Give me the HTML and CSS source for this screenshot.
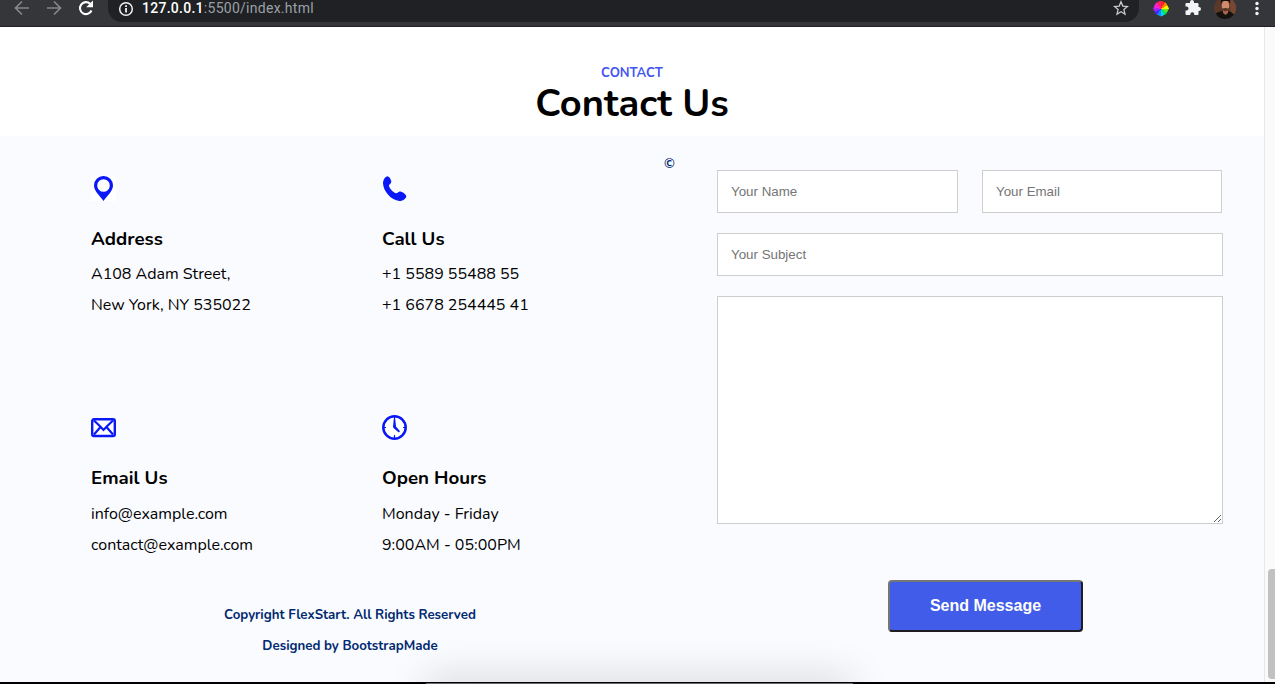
FILE: index.html
```html
<!DOCTYPE html>
<html lang="en">
<head>
<meta charset="utf-8">
<title>Contact Us</title>
<link rel="stylesheet" href="styles.css">
</head>
<body>
<header class="toolbar">
  <svg class="nav-icons" width="104" height="26" viewBox="0 0 104 26" fill="none" stroke-width="1.7">
    <path d="M29 8H16M22 1.500L15.500 8l6.500 6.500" stroke="#85878b"/>
    <path d="M47 8h13M54 1.500L60.500 8 54 14.500" stroke="#85878b"/>
    <path d="M91.500 10.500A6 6 0 1 1 90 3.600" stroke="#fff" stroke-width="2.100"/>
    <path d="M93 .5v6.800h-6.800z" fill="#fff"/>
  </svg>
  <div class="address-bar">
    <svg width="16" height="16" viewBox="0 0 16 16"><circle cx="8" cy="8" r="6.300" fill="none" stroke="#f1f1f1" stroke-width="1.500"/><path d="M7.200 7h1.700v4.500H7.200zM7.200 4.200h1.700v1.700H7.200z" fill="#fff"/></svg>
    <span class="url"><span class="host">127.0.0.1</span>:5500/index.html</span>
    <svg class="star" width="16" height="16" viewBox="0 0 16 16"><path d="M8 1.700l1.800 4.400 4.700.4-3.600 3.100 1.100 4.600L8 11.700l-4 2.500 1.100-4.600-3.600-3.100 4.700-.4z" fill="none" stroke="#c9cacd" stroke-width="1.300"/></svg>
  </div>
  <div class="extensions">
    <span class="color-wheel"></span>
    <svg class="puzzle" width="16" height="17" viewBox="0 0 16 17"><path d="M1.500 4H5V3a2 2 0 0 1 4 0v1h3.500a1 1 0 0 1 1 1v3h.5a2 2 0 0 1 0 4h-.5v3a1 1 0 0 1-1 1H9.300v-.8a2 2 0 0 0-4 0v.8H1.500a1 1 0 0 1-1-1v-3.500h1a2 2 0 0 0 0-4h-1V5a1 1 0 0 1 1-1z" fill="#f1f3f4"/></svg>
    <svg class="avatar" width="22" height="22" viewBox="0 0 22 22"><defs><clipPath id="avatar-clip"><circle cx="11" cy="11" r="11"/></clipPath></defs><g clip-path="url(#avatar-clip)"><path d="M0 0h22v22H0z" fill="#5b392a"/><path d="M15 0h7v17h-5z" fill="#77472f"/><path d="M0 22c0-6 4-8 11-8s10 3 10 8z" fill="#15110f"/><path d="M9 12h5v4l-2.500 2L9 16z" fill="#a8654b"/><ellipse cx="11.500" cy="8.500" rx="3.800" ry="5" fill="#d08c6c"/><path d="M7 7C6 1 9 0 12 0s5 2 4 7l-1-3H8z" fill="#15110f"/><path d="M8.300 11.500l3.200-.6 3.200.6-1.500 2.500h-3.400z" fill="#5a3225"/></g></svg>
    <svg width="4" height="18" viewBox="0 0 4 18"><g fill="#f1f3f4"><circle cx="2" cy="3.500" r="1.700"/><circle cx="2" cy="8.500" r="1.700"/><circle cx="2" cy="13.500" r="1.700"/></g></svg>
  </div>
</header>
<div class="viewport">
  <main class="page">
    <div class="section-title">
      <h2 class="eyebrow">Contact</h2>
      <p class="title">Contact Us</p>
    </div>
    <section class="contact">
      <div class="details">
        <div class="info-grid">
          <article class="info">
            <svg class="icon" viewBox="0 0 25 25"><path d="M0 0h25v25H0z" fill="#fff"/><path d="M12.500 0A9.400 9.400 0 0 0 3 9.500C3 15 9 20 12.500 25 16 20 22 15 22 9.500A9.400 9.400 0 0 0 12.500 0zm0 3.200a6.300 6.300 0 1 1 0 12.600 6.300 6.300 0 0 1 0-12.600z" fill="#0a18f8"/></svg>
            <h3>Address</h3>
            <p>A108 Adam Street,</p>
            <p>New York, NY 535022</p>
          </article>
          <article class="info">
            <svg class="icon" viewBox="0 0 25 25"><path d="M4.800.4C6.500-.3 9.500 3.500 9.300 6 9.200 7.800 6.500 8.500 7 10c.8 2.800 4 6.200 6.800 7.300 1.500.5 2.400-1.900 4.500-1.700 2.700.3 6 3.400 6 4.800-.1 2.200-3.800 4.700-7 4.500C9.300 24.500.8 15 1 6.800 1.100 3.900 2.900 1 4.800.4z" fill="#0a18f8"/></svg>
            <h3>Call Us</h3>
            <p>+1 5589 55488 55</p>
            <p>+1 6678 254445 41</p>
          </article>
          <article class="info info-lower">
            <svg class="icon" viewBox="0 0 25 25"><rect x="1.200" y="4.200" width="22.600" height="16.800" rx="1.800" fill="#fff" stroke="#0a18f8" stroke-width="2.400"/><path d="M3 5.500l6.500 6.300L12.500 15l3-3.200L22 5.500M3 19.500l6.500-7.500M22 19.500L15.500 12" fill="none" stroke="#0a18f8" stroke-width="2.200"/></svg>
            <h3>Email Us</h3>
            <p>info@example.com</p>
            <p>contact@example.com</p>
          </article>
          <article class="info info-lower">
            <svg class="icon" viewBox="0 0 25 25"><path d="M0 0h25v25H0z" fill="#fff"/><circle cx="12.500" cy="12.500" r="11.200" fill="none" stroke="#0a18f8" stroke-width="2.500"/><path d="M12.500 2v3M12.500 20v3M2 12.500h2M21 12.500h2" stroke="#0a18f8" stroke-width="1.200"/><path d="M11.700 4.500h1.600l.7 7 4 4.800-1.200 1.200-5-4.300-.8-1.200z" fill="#0a18f8"/></svg>
            <h3>Open Hours</h3>
            <p>Monday - Friday</p>
            <p>9:00AM - 05:00PM</p>
          </article>
        </div>
        <footer class="credits">
          <p>Copyright FlexStart. All Rights Reserved</p>
          <p>Designed by BootstrapMade</p>
        </footer>
      </div>
      <div class="mark">©</div>
      <form class="form">
        <div class="row">
          <input class="field" type="text" placeholder="Your Name">
          <input class="field" type="text" placeholder="Your Email">
        </div>
        <input class="field" type="text" placeholder="Your Subject">
        <textarea class="field message"></textarea>
        <button class="send" type="button">Send Message</button>
      </form>
    </section>
  </main>
  <div class="scroll-track"><div class="scroll-thumb"></div></div>
  <div class="dock-shadow"></div>
</div>
<div class="dock-edge"><div class="dock-line"></div></div>
</body>
</html>
```
FILE: styles.css
```css
* { box-sizing: border-box; }
body {
  margin: 0;
  width: 1275px;
  height: 684px;
  overflow: hidden;
  display: flex;
  flex-direction: column;
  background: #fff;
  color: #000;
  font-family: Nunito, Lato, sans-serif;
}
h2, h3, p { margin: 0; }
svg { display: block; flex: none; }

.toolbar {
  height: 27px;
  flex: none;
  display: flex;
  background: #35363a;
  border-bottom: 1px solid #202124;
}
.nav-icons { margin-right: 4px; }
.address-bar {
  width: 1031px;
  height: 22px;
  padding: 0 10px 5px;
  display: flex;
  align-items: center;
  background: #202124;
  border-radius: 0 0 14px 14px;
}
.url {
  margin: -2px 0 0 8px;
  color: #9aa0a6;
  font: 14px/16px Roboto, sans-serif;
  letter-spacing: .27px;
}
.host { color: #fff; font-weight: 500; }
.star { margin: -1px 0 0 auto; }
.extensions {
  height: 22px;
  padding: 0 0 5px 14px;
  display: flex;
  align-items: center;
}
.color-wheel {
  width: 16px;
  height: 16px;
  clip-path: polygon(50% 0, 82% 16%, 100% 50%, 82% 84%, 50% 100%, 18% 84%, 0 50%, 18% 16%);
  background: conic-gradient(#ff2020 0 30deg, #ff8500 30deg 60deg, #fff000 60deg 90deg, #55ef20 90deg 120deg, #00e45c 120deg 150deg, #00dcdc 150deg 180deg, #1488ff 180deg 215deg, #3d30ff 215deg 250deg, #b020f5 250deg 285deg, #ff20d0 285deg 325deg, #ff2065 325deg);
}
.puzzle { margin: -2px 0 0 16px; }
.avatar { margin: -2px 0 0 13px; }
.avatar + svg { margin-left: 19px; }

.viewport {
  position: relative;
  height: 655px;
  display: flex;
  overflow: hidden;
}
.page { width: 1264px; }
.section-title {
  height: 109px;
  padding-top: 37px;
  text-align: center;
}
.eyebrow {
  font-size: 13px;
  line-height: 18px;
  font-weight: 700;
  text-transform: uppercase;
  color: #4154f1;
}
.title {
  font-size: 38px;
  line-height: 44px;
  font-weight: 700;
}
.contact {
  height: 546px;
  display: grid;
  grid-template-columns: 573px 53px 506px;
  padding-left: 91px;
  background: #fafbff;
}
.info-grid {
  padding-top: 40px;
  display: grid;
  grid-template-columns: 291px 1fr;
  grid-template-rows: 239px 185px;
}
.icon { width: 25px; height: 25px; }
.info h3 {
  margin: 26px 0 7px;
  font-size: 18.720px;
  line-height: 25px;
  font-weight: 700;
}
.info-lower h3 { margin-bottom: 8px; }
.info p { font-size: 16px; line-height: 31px; white-space: nowrap; }
.credits {
  width: 518px;
  text-align: center;
  color: #012970;
  font-size: 13.280px;
  font-weight: 700;
}
.credits p { line-height: 31px; }
.mark {
  padding-top: 19px;
  color: #012970;
  font-size: 13.280px;
  line-height: 18px;
  font-weight: 700;
}
.form {
  padding-top: 34px;
  display: flex;
  flex-direction: column;
  gap: 20px;
}
.row { display: grid; grid-template-columns: 241px 240px; column-gap: 24px; }
.field {
  width: 100%;
  height: 43px;
  flex: none;
  margin: 0;
  padding: 12px 13px;
  border: 1px solid #cecece;
  background: #fff;
  font: 13.333px "Liberation Sans", sans-serif;
  outline: 0;
}
.field::placeholder { color: #757575; }
.message { height: 228px; resize: both; }
.send {
  width: 195px;
  height: 52px;
  margin: 36px 0 0 171px;
  padding: 0;
  border: 2px solid;
  border-color: #767676 #1d1d21 #1d1d21 #767676;
  border-radius: 4px;
  color: #fff;
  background: #405ce8;
  font: bold 16px "Liberation Sans", sans-serif;
}
.scroll-track {
  width: 11px;
  padding: 542px 0 0 3px;
  background: #fafafa;
  border-left: 1px solid #e7e7e7;
}
.scroll-thumb {
  width: 7px;
  height: 110px;
  border-radius: 4px 0 0 4px;
  background: #c1c1c1;
}
.dock-shadow {
  position: absolute;
  left: 432px;
  top: 657px;
  width: 414px;
  height: 20px;
  box-shadow: 0 0 40px 6px rgba(0, 0, 0, .15);
}
.dock-edge { height: 2px; background: #000; padding: 1px 0 0 426px; }
.dock-line { width: 427px; height: 1px; background: #666; }
```
